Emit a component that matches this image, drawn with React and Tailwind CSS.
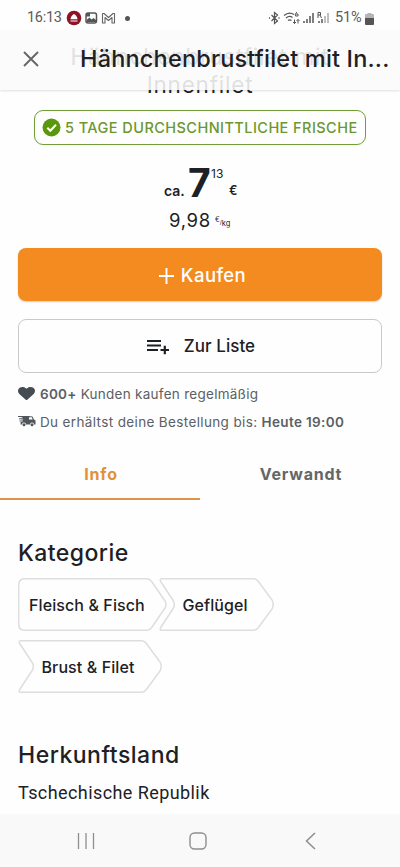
import { FaHeart } from "react-icons/fa"

function StatusBar() {
    return (
        <div className="h-[30px] w-full flex items-center pt-[6px] font-[Roboto,sans-serif] text-[#5b5b5b]">
            <span className="ml-[27px] mt-[1px] w-[39px] text-[14.5px] leading-none whitespace-nowrap tracking-[-0.3px]">16:13</span>
            <svg className="w-[50px] h-[16px]" viewBox="0 0 50 16" fill="none">
                <circle cx="8" cy="8" r="7.3" fill="#8d1424" />
                <path d="M4.500 9.200h7c-.3-2.400-1.300-3.800-3.500-5.200-2.200 1.400-3.200 2.800-3.500 5.200z" fill="#fff" />
                <path d="M4.500 11h7" stroke="#fff" />
                <rect x="20" y="3" width="10.500" height="10" rx="2" stroke="#555" strokeWidth="1.500" />
                <path d="M21 12v-2.500l2.500-2 2 2 2-1.500 2.500 2v2z" fill="#555" />
                <rect x="20" y="3" width="4" height="3.500" fill="#555" />
                <path d="M36.500 13V3.500h1.500l4.500 4 4.500-4h1.500V13h-2.500V7.500l-3.500 3-3.500-3V13z" stroke="#666" strokeWidth="1.100" strokeLinejoin="round" />
            </svg>
            <span className="ml-[9px] w-[5px] h-[5px] rounded-full bg-[#555]" />
            <svg className="ml-auto w-[64px] h-[16px]" viewBox="0 0 64 16" fill="none" stroke="#555" strokeWidth="1.200">
                <path d="M3.500 5l6 6-3 2.500v-11L9.500 5l-6 6M1.500 7.200v1.600M11 7.200v1.600" />
                <path d="M16 5.500c3.500-3 7-3 10-1M18 8c2.500-2 4.500-2 6.500-.500M20 10.500c1.200-1 2.300-1 3.500 0" />
                <path d="M29 2c-1.500 1-2 2.500-1.500 4h2.500v-2h-2" strokeWidth="1" />
                <path d="M26.500 9.500v4M25 12l1.500 1.500 1.500-1.500M30 13.500v-4M28.500 11l1.500-1.500L31.500 11" strokeWidth="1" />
                <path d="M36 11v2M39 9v4M42 6v7M45 3v10" strokeWidth="1.500" />
                <path d="M50 8V2.500h2.500v2.500H50M52 5l1.500 3" strokeWidth="1" />
                <path d="M51 11v2M54 9v4" strokeWidth="1.500" />
                <path d="M57 6v7M60 3v10" stroke="#aaa" strokeWidth="1.500" />
            </svg>
            <span className="ml-[3px] mt-[1px] w-[30px] text-[14.5px] leading-none whitespace-nowrap tracking-[-0.2px]">51%</span>
            <svg className="mr-[26px] w-[9px] h-[13px]" viewBox="0 0 9 13">
                <path d="M2.500 1h4v1H8a1 1 0 0 1 1 1v3H0V3a1 1 0 0 1 1-1h1.500z" fill="#b5b5b5" />
                <path d="M0 6h9v6a1 1 0 0 1-1 1H1a1 1 0 0 1-1-1z" fill="#555" />
            </svg>
        </div>
    )
}

function Header() {
    return (
        <header className="relative h-[60px] w-full">
            {/* page title scrolling away under the translucent bar */}
            <h1 className="absolute top-[13px] left-0 w-full text-center text-[22.5px] leading-[28px] tracking-[0.8px]">
                Hähnchenbrustfilet mit<br />Innenfilet
            </h1>
            <div className="relative h-full w-full flex items-center bg-[#fafafa]/88 shadow-[0_1px_2px_rgba(0,0,0,0.12)]">
                <svg className="ml-[23px] mt-[-3px] w-[16px] h-[16px]" viewBox="0 0 16 16" stroke="#666" strokeWidth="1.900">
                    <path d="M1 1l14 14M15 1L1 15" />
                </svg>
                <span className="ml-[41px] mt-[-2px] text-[23.5px] font-[450] tracking-[0.18px] whitespace-nowrap">Hähnchenbrustfilet mit In...</span>
            </div>
        </header>
    )
}

function Price() {
    return (
        <div className="h-[103px]">
            <div className="pt-[19px] pl-[164px] flex h-[57px]">
                <span className="w-[24px] mt-[19px] text-[14px] leading-[16px] font-semibold">ca.</span>
                <span className="w-[23px] text-[39px] leading-[38px] font-bold">7</span>
                <span className="w-[18px] mt-[3px] text-[12px] leading-[14px]">13</span>
                <span className="mt-[19px] text-[12.5px] leading-[16px] font-semibold">€</span>
            </div>
            <div className="pl-[169px] flex h-[36px] pt-[6px]">
                <span className="w-[46px] text-[18.5px] leading-[24px] tracking-[0.7px]">9,98</span>
                <span className="mt-[7px] text-[7px] leading-[10px]">€</span>
                <span className="mt-[9px] text-[6px] leading-[10px]">/</span>
                <span className="mt-[11px] text-[7.5px] leading-[10px]">kg</span>
            </div>
        </div>
    )
}

function Chip({ d, width, className, children }) {
    return (
        <div className={"relative h-[53px] flex items-center text-[16px] font-[450] tracking-[0.1px] whitespace-nowrap " + className}>
            <svg className="absolute inset-0" width={width} height="53" fill="none" stroke="#dedede" strokeWidth="1.500" strokeLinejoin="round">
                <path d={d} />
            </svg>
            <span className="relative">{children}</span>
        </div>
    )
}

function App() {
    return (
        <main className="h-[867px] w-full flex flex-col overflow-hidden bg-[#fefefe] text-[#1d2125] font-[Inter,sans-serif]">
            <StatusBar />
            <Header />

            <section className="px-[18px] pt-[20px]">
                <div className="mx-[16px] h-[35px] border border-[#6f9f35] rounded-[9px] flex items-center pl-[7px] text-[#6b9830]">
                    <svg className="w-[19px] h-[19px]" viewBox="0 0 19 19" fill="none">
                        <circle cx="9.500" cy="9.500" r="9" fill="#59980d" />
                        <path d="M5.300 9.800l3 3 5.700-6" stroke="#fff" strokeWidth="2" />
                    </svg>
                    <span className="ml-[4px] text-[14.500px] tracking-[0.44px] whitespace-nowrap font-[450]">5 TAGE DURCHSCHNITTLICHE FRISCHE</span>
                </div>
            </section>

            <Price />

            <section className="px-[18px]">
                <button className="h-[53px] w-full rounded-[8px] flex items-center justify-center pt-[2px] pl-[5px] gap-[7px] bg-[#f38b20] text-white text-[18.5px] font-[450] tracking-[0.4px] shadow-[0_1px_2px_rgba(0,0,0,0.2)]">
                    <svg className="w-[15px] h-[16px]" viewBox="0 0 15 16" stroke="currentColor" strokeWidth="1.900">
                        <path d="M7.500 0v16M0 8h15" />
                    </svg>
                    Kaufen
                </button>
                <button className="mt-[18px] h-[54px] w-full rounded-[8px] border border-[#c9c9c9] flex items-center justify-center pt-[1px] pl-[2px] gap-[14px] text-[17px] font-[450] tracking-[0.05px]">
                    <svg className="w-[23px] h-[16px]" viewBox="0 0 23 16" stroke="currentColor" strokeWidth="2.200">
                        <path d="M0 2h14M0 6.500h14M0 11h11M13.500 11H22M17.800 6.800v8.500" />
                    </svg>
                    Zur Liste
                </button>
            </section>

            <section className="pl-[18px] pt-[7px] text-[13.5px] text-[#5b6064] whitespace-nowrap">
                <div className="h-[28px] flex items-center">
                    <FaHeart className="w-[17px] h-[15px] mt-[-1px] text-[#454c52]" preserveAspectRatio="none" />
                    <span className="ml-[5px] tracking-[0.27px]"><b className="font-semibold">600+</b> Kunden kaufen regelmäßig</span>
                </div>
                <div className="h-[28px] flex items-center">
                    <svg className="w-[18px] h-[12px] mt-[-2px]" viewBox="0 0 18 12" fill="#50565b">
                        <path d="M3 1h7.500l4 .500 1.500 3 1.500 1v4H16a2 2 0 0 0-4 0H8a2 2 0 0 0-4 0H2.500z" />
                        <circle cx="6" cy="9.700" r="1.500" />
                        <circle cx="14" cy="9.700" r="1.500" />
                        <path d="M11 2.300h2.700l1 2.200H11z" fill="#fff" />
                        <path d="M0 1.500h4M1 3.800h4M1.500 6h3" stroke="#fff" strokeWidth="2" />
                        <path d="M0 1.500h4M1 3.800h4M1.500 6h3" stroke="#50565b" />
                    </svg>
                    <span className="ml-[4px] tracking-[0.36px]">Du erhältst deine Bestellung bis: <b className="font-semibold">Heute 19:00</b></span>
                </div>
            </section>

            <nav className="mt-[12px] h-[52px] w-full grid grid-cols-2 text-[16px] font-bold tracking-[0.8px] text-[#646668]">
                <div className="pt-[1px] pl-[2px] flex items-center justify-center border-b-2 border-[#df924a] text-[#df9138]">Info</div>
                <div className="pb-[1px] pl-[2px] flex items-center justify-center">Verwandt</div>
            </nav>

            <section className="pl-[18px] pt-[38px]">
                <h2 className="text-[23px] leading-[30px] font-[450] tracking-[0.45px]">Kategorie</h2>
                <div className="mt-[10px] flex">
                    <Chip className="w-[141px] pl-[11px]" width="150" d="M7 .7H128Q132 .7 134 4L147 23Q149 26.500 147 30L134 49Q132 52.300 128 52.300H7Q.7 52.300 .7 46V7Q.7 .7 7 .7Z">Fleisch &amp; Fisch</Chip>
                    <Chip className="w-[116px] pl-[23.5px]" width="116" d="M3 .7H94Q97 .7 99 3L113 22Q115.500 26.500 113 31L99 50Q97 52.300 94 52.300H3Q0 52.300 2 49L14.500 30Q16 26.500 14.500 23L2 4Q0 .7 3 .7Z">Geflügel</Chip>
                </div>
                <div className="mt-[9px] flex">
                    <Chip className="w-[145px] pl-[23.5px]" width="145" d="M3 .7H123Q126 .7 128 3L142 22Q144.500 26.500 142 31L128 50Q126 52.300 123 52.300H3Q0 52.300 2 49L14.500 30Q16 26.500 14.500 23L2 4Q0 .7 3 .7Z">Brust &amp; Filet</Chip>
                </div>
            </section>

            <section className="pl-[18px] pt-[47px]">
                <h2 className="text-[23px] leading-[30px] font-[450] tracking-[0.5px]">Herkunftsland</h2>
                <p className="mt-[11px] text-[18px] leading-[24px] tracking-[0.42px] font-[Roboto,sans-serif] whitespace-nowrap">Tschechische Republik</p>
            </section>

            <footer className="mt-auto h-[53px] shrink-0 w-full flex items-center bg-[#f9f9f9] text-[#8e8e8e]">
                <svg className="ml-[77px] w-[18px] h-[18px]" viewBox="0 0 18 18" stroke="currentColor" strokeWidth="1.300">
                    <path d="M1.500 1v16M9 1v16M16.500 1v16" />
                </svg>
                <svg className="ml-[94px] w-[18px] h-[18px]" viewBox="0 0 18 18" fill="none" stroke="currentColor" strokeWidth="1.400">
                    <rect x="1" y="1" width="16" height="16" rx="4.500" />
                </svg>
                <svg className="ml-[98px] w-[11px] h-[18px]" viewBox="0 0 11 18" fill="none" stroke="currentColor" strokeWidth="1.500">
                    <path d="M10 1L1.500 9l8.500 8" />
                </svg>
            </footer>
        </main>
    )
}

export default App
